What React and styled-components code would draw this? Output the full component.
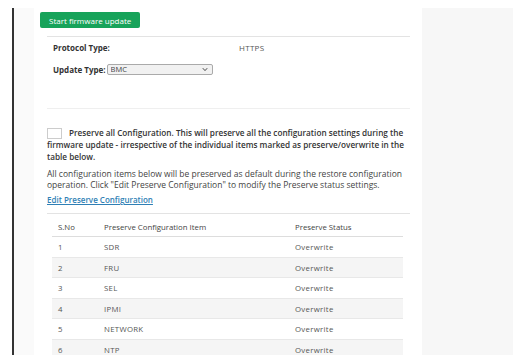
import React from 'react'
import styled, { createGlobalStyle } from 'styled-components'

const GlobalStyle = createGlobalStyle`
  html, body {
    margin: 0;
    padding: 0;
    background: #ffffff;
    font-family: "Open Sans", "Liberation Sans", sans-serif;
    color: #333;
  }
`

const Page = styled.div`
  display: flex;
  padding: 8px 0 0 12px;
  height: 347px;
  overflow: hidden;
`

const Main = styled.div`
  width: 388px;
  border-left: 2px solid #333;
  background: #fafafa;
  padding-left: 20px;
`

const Content = styled.div`
  background: #fff;
  height: 100%;
  padding: 4px 12px 0 6px;
`

const Sidebar = styled.div`
  flex: 1;
  background: #f7f7f7;
`

const GreenButton = styled.button`
  display: block;
  height: 16px;
  padding: 0 9px;
  border: none;
  border-radius: 2px;
  background: #17a35a;
  color: #fff;
  font-family: inherit;
  font-size: 8px;
  font-weight: 500;
  cursor: pointer;
`

const Section = styled.div`
  margin-left: 7px;
  border-top: 1px solid ${p => (p.$light ? '#efefef' : '#e3e3e3')};
  padding: ${p => p.$pad || '0'};
`

const FieldRow = styled.div`
  display: flex;
  align-items: center;
  height: ${p => p.$h || 22}px;
  padding-left: 6px;
  font-size: 8px;
`

const Label = styled.span`
  font-weight: 700;
  color: #333;
  width: ${p => (p.$w ? p.$w + 'px' : 'auto')};
  margin-right: 1px;
`

const Value = styled.span`
  color: #555;
  letter-spacing: 0.3px;
`

const SelectWrap = styled.span`
  position: relative;
  display: inline-flex;
`

const Select = styled.select`
  appearance: none;
  width: 106px;
  height: 11px;
  padding: 0 3px;
  font-family: inherit;
  font-size: 7.5px;
  line-height: 9px;
  color: #444;
  border: 1px solid #aaa;
  border-radius: 2px;
  background: #f1f1f1;
`

const Chevron = styled.svg`
  position: absolute;
  right: 5px;
  top: 3px;
  pointer-events: none;
`

const Para = styled.p`
  margin: 0;
  font-size: ${p => p.$size || 8.5}px;
  line-height: ${p => p.$lh || 11}px;
  font-weight: ${p => (p.$bold ? 600 : 400)};
  color: ${p => (p.$bold ? '#333' : '#444')};
`

const Check = styled.span`
  display: inline-block;
  width: 13px;
  height: 9px;
  border: 1px solid #ccc;
  background: #fff;
  vertical-align: middle;
  margin-right: 7px;
`

const LinkText = styled.a`
  display: block;
  margin-top: 4px;
  font-size: 8px;
  font-weight: 600;
  color: #2f7fb5;
  text-decoration: underline;
  cursor: pointer;
`

const Table = styled.table`
  width: 351px;
  margin-left: 5px;
  margin-top: 3px;
  border-collapse: collapse;
  font-size: 7.8px;
  color: #555;
`

const Th = styled.th`
  text-align: left;
  font-weight: 500;
  color: #444;
  height: 19px;
  padding: 0 0 0 ${p => p.$pl || 0}px;
  border-bottom: 1px solid #ddd;
`

const Tr = styled.tr`
  background: ${p => (p.$alt ? '#f5f5f5' : '#fff')};
  border-bottom: 1px solid #e8e8e8;
`

const Td = styled.td`
  height: 19.5px;
  padding: 0 0 0 ${p => p.$pl || 0}px;
  letter-spacing: 0.3px;
`

const rows = ['SDR', 'FRU', 'SEL', 'IPMI', 'NETWORK', 'NTP']

export default function App() {
  return (
    <>
      <GlobalStyle />
      <Page>
        <Main>
          <Content>
            <GreenButton>Start firmware update</GreenButton>
            <Section style={{ marginTop: 8 }}>
              <FieldRow $h={21}>
                <Label $w={185}>Protocol Type:</Label>
                <Value>HTTPS</Value>
              </FieldRow>
              <FieldRow $h={22}>
                <Label>Update Type:</Label>
                <SelectWrap>
                  <Select defaultValue="BMC">
                    <option>BMC</option>
                  </Select>
                  <Chevron width="6" height="5" viewBox="0 0 6 5">
                    <path d="M0.8 1.2 L3 3.6 L5.2 1.2" fill="none" stroke="#333" strokeWidth="0.9" />
                  </Chevron>
                </SelectWrap>
              </FieldRow>
              <div style={{ height: 28 }} />
            </Section>
            <Section $light $pad="18px 0 0 0">
              <Para $bold $size={8.2} $lh={11.5}>
                <Check />
                Preserve all Configuration. This will preserve all the configuration settings during the firmware update - irrespective of the individual items marked as preserve/overwrite in the table below.
              </Para>
              <Para $lh={10.5} style={{ marginTop: 7 }}>
                All configuration items below will be preserved as default during the restore configuration operation. Click "Edit Preserve Configuration" to modify the Preserve status settings.
              </Para>
              <LinkText>Edit Preserve Configuration</LinkText>
            </Section>
            <Section style={{ marginTop: 8 }}>
              <Table>
                <thead>
                  <tr>
                    <Th $pl={6} style={{ width: 46 }}>S.No</Th>
                    <Th style={{ width: 191 }}>Preserve Configuration Item</Th>
                    <Th>Preserve Status</Th>
                  </tr>
                </thead>
                <tbody>
                  {rows.map((r, i) => (
                    <Tr key={r} $alt={i % 2 === 1}>
                      <Td $pl={6}>{i + 1}</Td>
                      <Td>{r}</Td>
                      <Td>Overwrite</Td>
                    </Tr>
                  ))}
                </tbody>
              </Table>
            </Section>
          </Content>
        </Main>
        <Sidebar />
      </Page>
    </>
  )
}
